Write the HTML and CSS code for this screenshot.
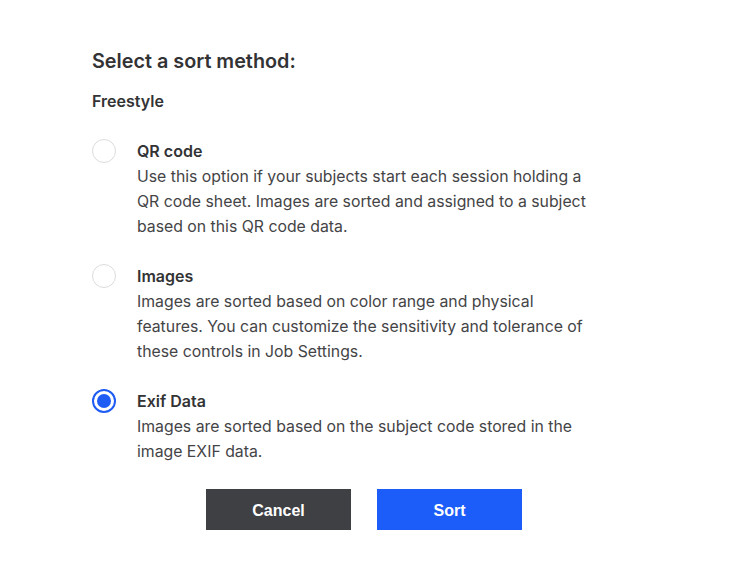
FILE: index.html
```html
<!DOCTYPE html>
<html>
<head>
<meta charset="utf-8">
<link rel="stylesheet" href="styles.css">
</head>
<body>
<div class="dialog">
  <h1 class="title">Select a sort method:</h1>
  <h2 class="group">Freestyle</h2>
  <div class="options">
    <div class="option">
      <span class="radio"></span>
      <div class="text">
        <div class="label">QR code</div>
        <div class="desc">Use this option if your subjects start each session holding a QR code sheet. Images are sorted and assigned to a subject based on this QR code data.</div>
      </div>
    </div>
    <div class="option">
      <span class="radio"></span>
      <div class="text">
        <div class="label">Images</div>
        <div class="desc">Images are sorted based on color range and physical features. You can customize the sensitivity and tolerance of these controls in Job Settings.</div>
      </div>
    </div>
    <div class="option">
      <span class="radio checked"></span>
      <div class="text">
        <div class="label">Exif Data</div>
        <div class="desc">Images are sorted based on the subject code stored in the image EXIF data.</div>
      </div>
    </div>
  </div>
  <div class="actions">
    <button class="btn cancel">Cancel</button>
    <button class="btn sort">Sort</button>
  </div>
</div>
</body>
</html>
```
FILE: styles.css
```css
html, body {
  margin: 0;
  padding: 0;
  background: #ffffff;
}
body {
  font-family: Inter, "Noto Sans", sans-serif;
  color: #3a3a3c;
}
.dialog {
  width: 544px;
  padding: 47px 0 0 92px;
}
.title {
  margin: 0;
  font-size: 19.8px;
  font-weight: 600;
  line-height: 28px;
  color: #333335;
}
.group {
  margin: 16px 0 0;
  font-size: 16px;
  font-weight: 600;
  line-height: 20px;
  color: #333335;
}
.options {
  margin-top: 28px;
  display: flex;
  flex-direction: column;
  gap: 25px;
}
.option {
  display: flex;
  align-items: flex-start;
  gap: 21px;
}
.radio {
  flex: none;
  width: 24px;
  height: 24px;
  box-sizing: border-box;
  border: 1px solid #dcdcdc;
  border-radius: 50%;
  position: relative;
}
.radio.checked {
  border: 2px solid #1f5cf5;
}
.radio.checked::after {
  content: "";
  position: absolute;
  left: 3px;
  top: 3px;
  width: 14px;
  height: 14px;
  border-radius: 50%;
  background: #1f5cf5;
}
.text {
  width: 456px;
}
.label {
  font-size: 16px;
  font-weight: 600;
  line-height: 25px;
  color: #333335;
}
.desc {
  font-size: 15.8px;
  line-height: 25px;
  color: #444446;
}
.actions {
  margin-top: 25px;
  display: flex;
  justify-content: center;
  gap: 26px;
}
.btn {
  width: 145px;
  height: 41px;
  padding: 2px 0 0;
  border: none;
  border-radius: 0;
  font-family: "Liberation Sans", Arial, sans-serif;
  font-size: 16px;
  font-weight: 700;
  color: #ffffff;
}
.cancel {
  background: #3f4044;
}
.sort {
  background: #1c5cf8;
}
```
